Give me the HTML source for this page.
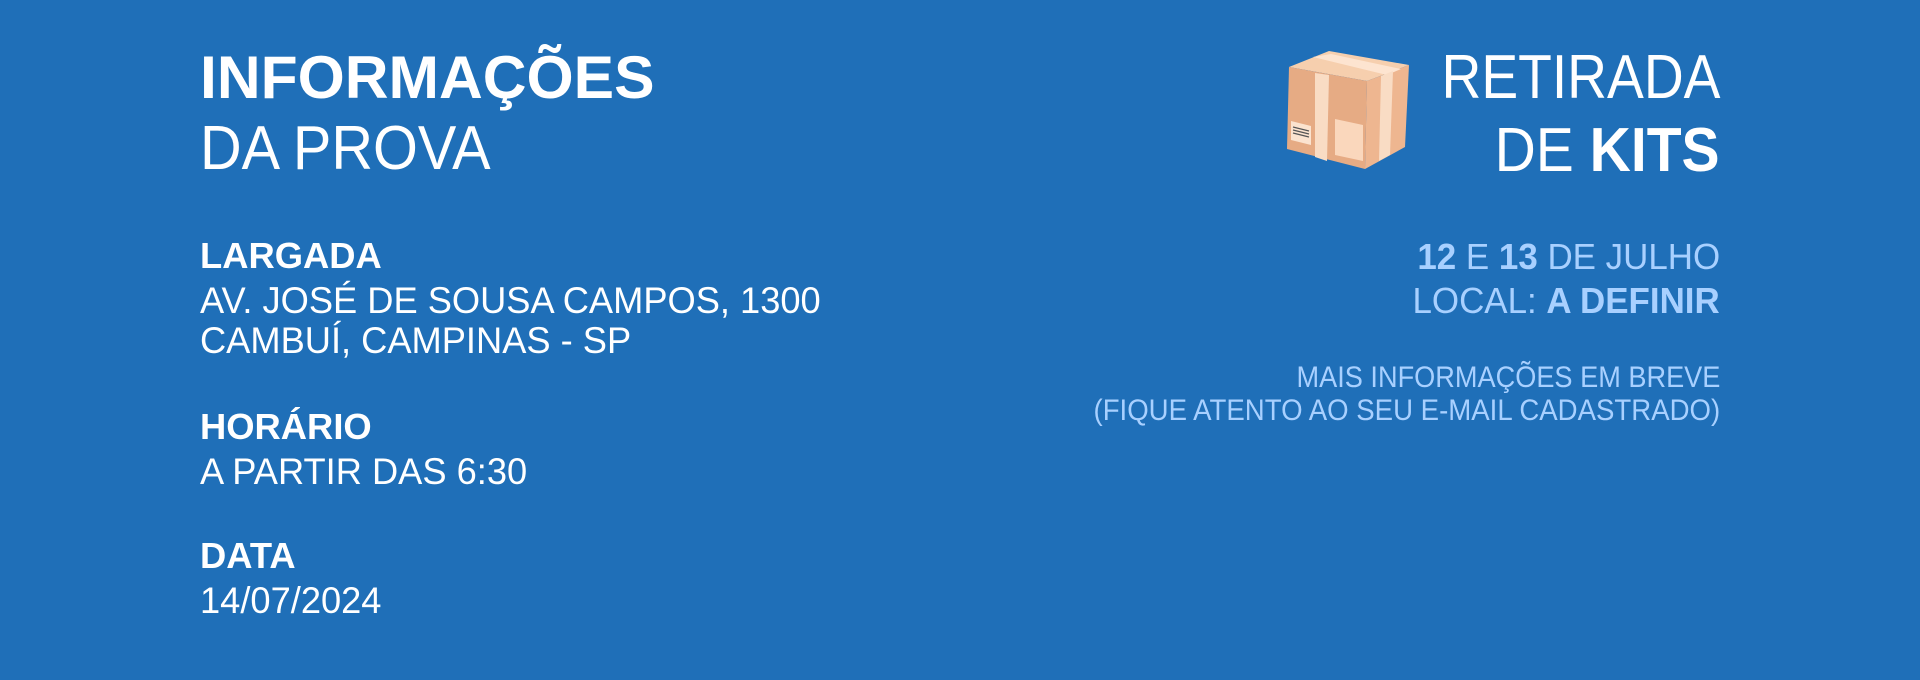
<!DOCTYPE html>
<html><head><meta charset="utf-8"><style>
html,body{margin:0;padding:0}
body{width:1920px;height:680px;background:#1f6fb8;position:relative;overflow:hidden;font-family:"Liberation Sans",sans-serif;color:#fff}
.t{position:absolute;white-space:nowrap;line-height:1}
.l{left:200px;transform-origin:left top}
.r{right:200px;transform-origin:right top;text-align:right}
.b{font-weight:bold}
.lb{color:#a8d0ff}
</style></head><body>
<div class="t l b" style="top:48px;font-size:60px;transform:scaleX(1.01)">INFORMAÇÕES</div>
<div class="t l" style="top:118px;font-size:62px;transform:scaleX(0.93)">DA PROVA</div>
<div class="t l b" style="top:238px;font-size:36px;transform:scaleX(1.01)">LARGADA</div>
<div class="t l" style="top:282px;font-size:37px;transform:scaleX(0.98)">AV. JOSÉ DE SOUSA CAMPOS, 1300</div>
<div class="t l" style="top:322px;font-size:37px;transform:scaleX(0.98)">CAMBUÍ, CAMPINAS - SP</div>
<div class="t l b" style="top:409px;font-size:36px;transform:scaleX(1.01)">HORÁRIO</div>
<div class="t l" style="top:453px;font-size:37px;transform:scaleX(0.98)">A PARTIR DAS 6:30</div>
<div class="t l b" style="top:538px;font-size:36px;transform:scaleX(1.01)">DATA</div>
<div class="t l" style="top:582px;font-size:37px;transform:scaleX(0.98)">14/07/2024</div>

<svg style="position:absolute;left:1283px;top:49px" width="128" height="120" viewBox="0 0 128 120">
<polygon points="6,18 46,2 126,16 84,32" fill="#f6cfae"/>
<polygon points="6,18 84,32 82,120 4,100" fill="#e6ab84"/>
<polygon points="84,32 126,16 122,98 82,120" fill="#eeb690"/>
<polygon points="30,8 48,5 118,20 104,26" fill="#fde4d0"/>
<polygon points="32,24 46,26 44,112 32,108" fill="#f9dcc4"/>
<polygon points="98,27 110,22 107,106 96,112" fill="#f9dcc4"/>
<polygon points="52,70 80,76 80,112 52,106" fill="#fad7bc"/>
<polygon points="8,72 28,77 28,96 8,91" fill="#fbe3cf"/>
<g stroke="#555" stroke-width="1.2"><line x1="10" y1="78" x2="26" y2="82"/><line x1="10" y1="81" x2="26" y2="85"/><line x1="10" y1="84" x2="26" y2="88"/></g>
</svg>
<div class="t r" style="top:47px;font-size:62px;transform:scaleX(0.89)">RETIRADA</div>
<div class="t r" style="top:120px;font-size:62px;transform:scaleX(0.92)"><span>DE </span><b>KITS</b></div>
<div class="t r lb" style="top:239px;font-size:36px;transform:scaleX(0.97)"><b>12</b> E <b>13</b> DE JULHO</div>
<div class="t r lb" style="top:283px;font-size:36px;transform:scaleX(0.97)">LOCAL: <b>A DEFINIR</b></div>
<div class="t r lb" style="top:363px;font-size:30px;transform:scaleX(0.905)">MAIS INFORMAÇÕES EM BREVE</div>
<div class="t r lb" style="top:396px;font-size:30px;transform:scaleX(0.92)">(FIQUE ATENTO AO SEU E-MAIL CADASTRADO)</div>
</body></html>
